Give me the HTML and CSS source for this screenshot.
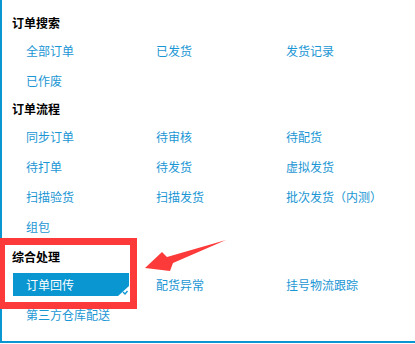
FILE: index.html
```html
<!DOCTYPE html>
<html lang="zh-CN">
<head>
    <meta charset="UTF-8">
    <title>订单菜单</title>
    <link rel="stylesheet" href="styles.css">
</head>
<body>
    <div class="menu">
        <div class="group">
            <h3>订单搜索</h3>
            <div class="links">
                <a>全部订单</a>
                <a>已发货</a>
                <a>发货记录</a>
                <a>已作废</a>
            </div>
        </div>
        <div class="group">
            <h3>订单流程</h3>
            <div class="links">
                <a>同步订单</a>
                <a>待审核</a>
                <a>待配货</a>
                <a>待打单</a>
                <a>待发货</a>
                <a>虚拟发货</a>
                <a>扫描验货</a>
                <a>扫描发货</a>
                <a>批次发货（内测）</a>
                <a>组包</a>
            </div>
        </div>
        <div class="group last">
            <h3>综合处理</h3>
            <div class="links">
                <a class="active">订单回传
                    <svg class="tick" width="11" height="10" viewBox="0 0 11 10"><polygon points="11,0 11,10 0,10" fill="#fff"/><path d="M5 6 L7 8 L9.5 5" fill="none" stroke="#0a96d0" stroke-width="1.3"/></svg>
                </a>
                <a>配货异常</a>
                <a>挂号物流跟踪</a>
                <a>第三方仓库配送</a>
            </div>
        </div>
    </div>

    <div class="mark" aria-hidden="true"></div>
    <svg class="arrow" width="415" height="344" viewBox="0 0 415 344" aria-hidden="true">
        <polygon points="145,268 162,252 167,257 226,240 173,263 170,271" fill="#fd3a3a"/>
    </svg>
</body>
</html>
```

FILE: styles.css
```css
body {
    margin: 0;
    font-family: "Noto Sans CJK SC", sans-serif;
    font-size: 12px;
    background: #fff;
    overflow: hidden;
}

.menu {
    height: 330px;
    padding: 11px 0 0 10px;
    border-left: 2px solid #0a96d0;
    border-bottom: 2px solid #0a96d0;
}

.group h3 {
    margin: 0;
    font-size: 12px;
    line-height: 24px;
    font-weight: bold;
    color: #000;
}

.group + .group {
    margin-top: 2px;
}

.group.last {
    margin-top: 4px;
}

.links {
    display: grid;
    grid-template-columns: 130px 130px 130px;
    padding-left: 1px;
}

.links a {
    display: flex;
    align-items: center;
    height: 30px;
    padding-left: 13px;
    color: #1a96d4;
    white-space: nowrap;
}

.links a.active {
    position: relative;
    height: 23px;
    margin: 3.5px 0;
    margin-right: 14px;
    background: #0a96d0;
    color: #fff;
}

.tick {
    position: absolute;
    right: 0;
    bottom: 0;
}

.mark {
    position: absolute;
    left: -2px;
    top: 238px;
    width: 139px;
    height: 71px;
    box-sizing: border-box;
    border: 7px solid #fd3a3a;
}

.arrow {
    position: absolute;
    left: 0;
    top: 0;
}
```
